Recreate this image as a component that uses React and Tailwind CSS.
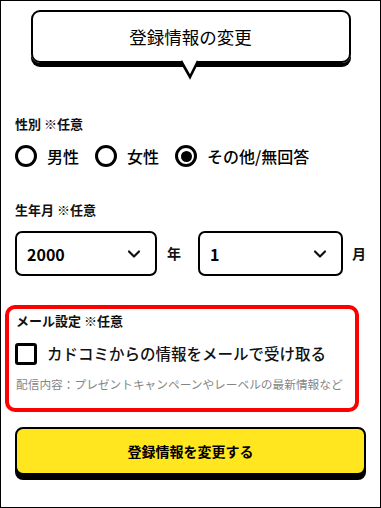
import React from "react";

function Radio({ checked, label }) {
  return (
    <label className="flex items-center gap-[10px]">
      <span className="w-[22px] h-[22px] rounded-full border-[3px] border-black flex items-center justify-center">
        {checked && <span className="w-[11px] h-[11px] rounded-full bg-black" />}
      </span>
      <span className="text-[16px] font-medium leading-none text-black">{label}</span>
    </label>
  );
}

function Select({ value }) {
  return (
    <div className="w-[145px] h-[45px] border-[2.5px] border-black rounded-[7px] flex items-center justify-between pl-[10px] pr-[14px]">
      <span className="text-[16px] font-bold text-black">{value}</span>
      <svg width="14" height="10" viewBox="0 0 14 10" fill="none">
        <path d="M2 2.5 L7 7.5 L12 2.5" stroke="#111" strokeWidth="2.2" strokeLinecap="round" strokeLinejoin="round" />
      </svg>
    </div>
  );
}

export default function App() {
  return (
    <div className="w-[381px] h-[508px] border border-black bg-white overflow-hidden font-['Noto_Sans_CJK_JP','Noto_Sans',sans-serif] text-[#111]">
      <div className="pt-[9px] flex justify-center">
        <div className="relative w-[320px] h-[53px] border-[2.5px] border-black rounded-[9px] shadow-[0_4px_0_#000] flex items-center justify-center">
          <span className="text-[17.5px] leading-none text-black">登録情報の変更</span>
          <svg
            className="absolute left-[146px] top-[48px]"
            width="22"
            height="22"
            viewBox="0 0 22 22"
            fill="none"
          >
            <polygon points="2,0 20,0 11,17" fill="#fff" />
            <path d="M2 1 L11 17 L19 1" stroke="#000" strokeWidth="2.6" strokeLinejoin="miter" />
          </svg>
        </div>
      </div>

      <div className="px-[14px]">
        <div className="mt-[51px] text-[13px] font-bold leading-[19px]">性別 ※任意</div>
        <div className="mt-[12px] flex items-center gap-[16px]">
          <Radio label="男性" />
          <Radio label="女性" />
          <Radio checked label="その他/無回答" />
        </div>

        <div className="mt-[33px] text-[13px] font-bold leading-[19px]">生年月 ※任意</div>
        <div className="mt-[12px] flex items-center">
          <Select value="2000" />
          <span className="ml-[10px] text-[14px] font-bold">年</span>
          <span className="ml-[17px]">
            <Select value="1" />
          </span>
          <span className="ml-[9px] text-[14px] font-bold">月</span>
        </div>

        <div className="relative mt-[29px] pt-[6px] pb-[14px]">
          <div className="absolute left-[-10px] right-[7px] top-0 bottom-[-6px] border-[4px] border-[#ff0000] rounded-[10px] pointer-events-none" />
          <div className="pl-[1px] text-[13px] font-bold leading-[19px]">メール設定 ※任意</div>
          <div className="mt-[13px] flex items-center gap-[10px]">
            <span className="w-[22px] h-[22px] border-[3px] border-black rounded-[3px]" />
            <span className="text-[15.5px] font-medium leading-none">カドコミからの情報をメールで受け取る</span>
          </div>
          <div className="mt-[11px] pl-[1px] text-[11.7px] leading-[16px] text-[#858585]">
            配信内容：プレゼントキャンペーンやレーベルの最新情報など
          </div>
        </div>

        <button className="mt-[21px] w-[351px] h-[48px] bg-[#ffe61e] border-[2.5px] border-black rounded-[8px] shadow-[0_5px_0_#000] flex items-center justify-center">
          <span className="text-[14px] font-bold text-black">登録情報を変更する</span>
        </button>
      </div>
    </div>
  );
}
